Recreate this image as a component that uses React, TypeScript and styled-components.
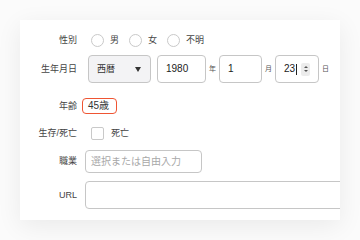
import React from "react";
import styled, { createGlobalStyle } from "styled-components";

const GlobalStyle = createGlobalStyle`
  html, body {
    margin: 0;
    padding: 0;
    background: #fbfbfb;
  }
  body {
    font-family: "Liberation Sans", "Noto Sans CJK JP", sans-serif;
    line-height: 1.2;
    color: #333;
  }
  * {
    box-sizing: border-box;
  }
`;

export default function App() {
  return (
    <>
      <GlobalStyle />
      <Page>
        <Card>
          <Row $mt={0} $h={20}>
            <Label>性別</Label>
            <RadioGroup>
              {["男", "女", "不明"].map((g) => (
                <RadioOption key={g}>
                  <RadioCircle />
                  <OptionText>{g}</OptionText>
                </RadioOption>
              ))}
            </RadioGroup>
          </Row>

          <Row $mt={5} $h={28}>
            <Label>生年月日</Label>
            <Controls>
              <SelectBox>
                <span>西暦</span>
                <Arrow />
              </SelectBox>
              <NumBox $w={49} $ml={6}>1980</NumBox>
              <Unit>年</Unit>
              <NumBox $w={43}>1</NumBox>
              <Unit>月</Unit>
              <NumBox $w={44}>
                23
                <Caret />
                <Spinner>
                  <Tri $up />
                  <Tri />
                </Spinner>
              </NumBox>
              <Unit>日</Unit>
            </Controls>
          </Row>

          <Row $mt={13} $h={20}>
            <Label>年齢</Label>
            <Controls>
              <AgeBadge>45歳</AgeBadge>
            </Controls>
          </Row>

          <Row $mt={7} $h={20}>
            <Label>生存/死亡</Label>
            <Controls>
              <CheckBox />
              <OptionText $ml={7}>死亡</OptionText>
            </Controls>
          </Row>

          <Row $mt={7} $h={23}>
            <Label>職業</Label>
            <Controls>
              <TextInput $w={117} $h={23} placeholder="選択または自由入力" />
            </Controls>
          </Row>

          <Row $mt={8} $h={28}>
            <Label>URL</Label>
            <Controls>
              <TextInput $w={300} $h={28} />
            </Controls>
          </Row>
        </Card>
      </Page>
    </>
  );
}

const Page = styled.div`
  width: 360px;
  height: 240px;
  padding: 20px;
`;
const Card = styled.section`
  width: 320px;
  height: 200px;
  background: #fff;
  box-shadow: 0 6px 24px rgba(0, 0, 0, 0.07);
  overflow: hidden;
  padding-top: 10px;
`;
const Row = styled.div<{ $mt: number; $h: number }>`
  display: flex;
  align-items: center;
  height: ${(p) => p.$h}px;
  margin-top: ${(p) => p.$mt}px;
`;
const Label = styled.div`
  width: 57px;
  flex: none;
  text-align: right;
  font-size: 9px;
  color: #444;
`;
const Controls = styled.div`
  display: flex;
  align-items: center;
  margin-left: 5px;
  flex: none;
`;
const RadioGroup = styled(Controls)`
  padding-left: 9px;
  gap: 10px;
`;
const RadioOption = styled.label`
  display: flex;
  align-items: center;
  gap: 6px;
`;
const RadioCircle = styled.span`
  width: 13px;
  height: 13px;
  border: 1px solid #c9c9c9;
  border-radius: 50%;
  background: #fff;
`;
const OptionText = styled.span<{ $ml?: number }>`
  font-size: 9px;
  color: #444;
  margin-left: ${(p) => p.$ml ?? 0}px;
`;
const SelectBox = styled.div`
  margin-left: 6px;
  width: 63px;
  height: 28px;
  border: 1px solid #c6c6c6;
  border-radius: 4px;
  background: #f3f3f5;
  display: flex;
  align-items: center;
  justify-content: space-between;
  padding: 0 9px 0 8px;
  font-size: 9px;
  color: #333;
`;
const Arrow = styled.span`
  width: 0;
  height: 0;
  border-left: 3px solid transparent;
  border-right: 3px solid transparent;
  border-top: 5px solid #333;
`;
const NumBox = styled.div<{ $w: number; $ml?: number }>`
  width: ${(p) => p.$w}px;
  height: 28px;
  margin-left: ${(p) => p.$ml ?? 0}px;
  border: 1px solid #c6c6c6;
  border-radius: 4px;
  background: #fff;
  display: flex;
  align-items: center;
  padding-left: 8px;
  font-size: 10px;
  color: #222;
`;
const Caret = styled.span`
  width: 1px;
  height: 11px;
  background: #222;
  margin-left: 0.5px;
`;
const Spinner = styled.span`
  margin-left: auto;
  margin-right: 8px;
  width: 9px;
  height: 13px;
  border-radius: 2px;
  background: #ececec;
  display: flex;
  flex-direction: column;
  align-items: center;
  justify-content: center;
  gap: 1.5px;
`;
const Tri = styled.span<{ $up?: boolean }>`
  width: 0;
  height: 0;
  border-left: 2px solid transparent;
  border-right: 2px solid transparent;
  ${(p) =>
    p.$up ? "border-bottom: 2.5px solid #555;" : "border-top: 2.5px solid #555;"}
`;
const Unit = styled.span`
  width: 13px;
  text-align: center;
  font-size: 7px;
  color: #555;
`;
const AgeBadge = styled.span`
  height: 16px;
  width: 35px;
  border: 1.5px solid #ef5533;
  border-radius: 4px;
  display: flex;
  align-items: center;
  padding-left: 5px;
  font-size: 10px;
  color: #333;
`;
const CheckBox = styled.span`
  margin-left: 9px;
  width: 13px;
  height: 13px;
  border: 1px solid #c9c9c9;
  border-radius: 2px;
  background: #fff;
`;
const TextInput = styled.input<{ $w: number; $h: number }>`
  margin-left: 3px;
  width: ${(p) => p.$w}px;
  height: ${(p) => p.$h}px;
  border: 1px solid #c6c6c6;
  border-radius: 4px;
  background: #fff;
  padding: 0 5px;
  font-family: inherit;
  font-size: 10px;
  color: #222;
  outline: none;
  &::placeholder {
    color: #a8a8a8;
  }
`;
